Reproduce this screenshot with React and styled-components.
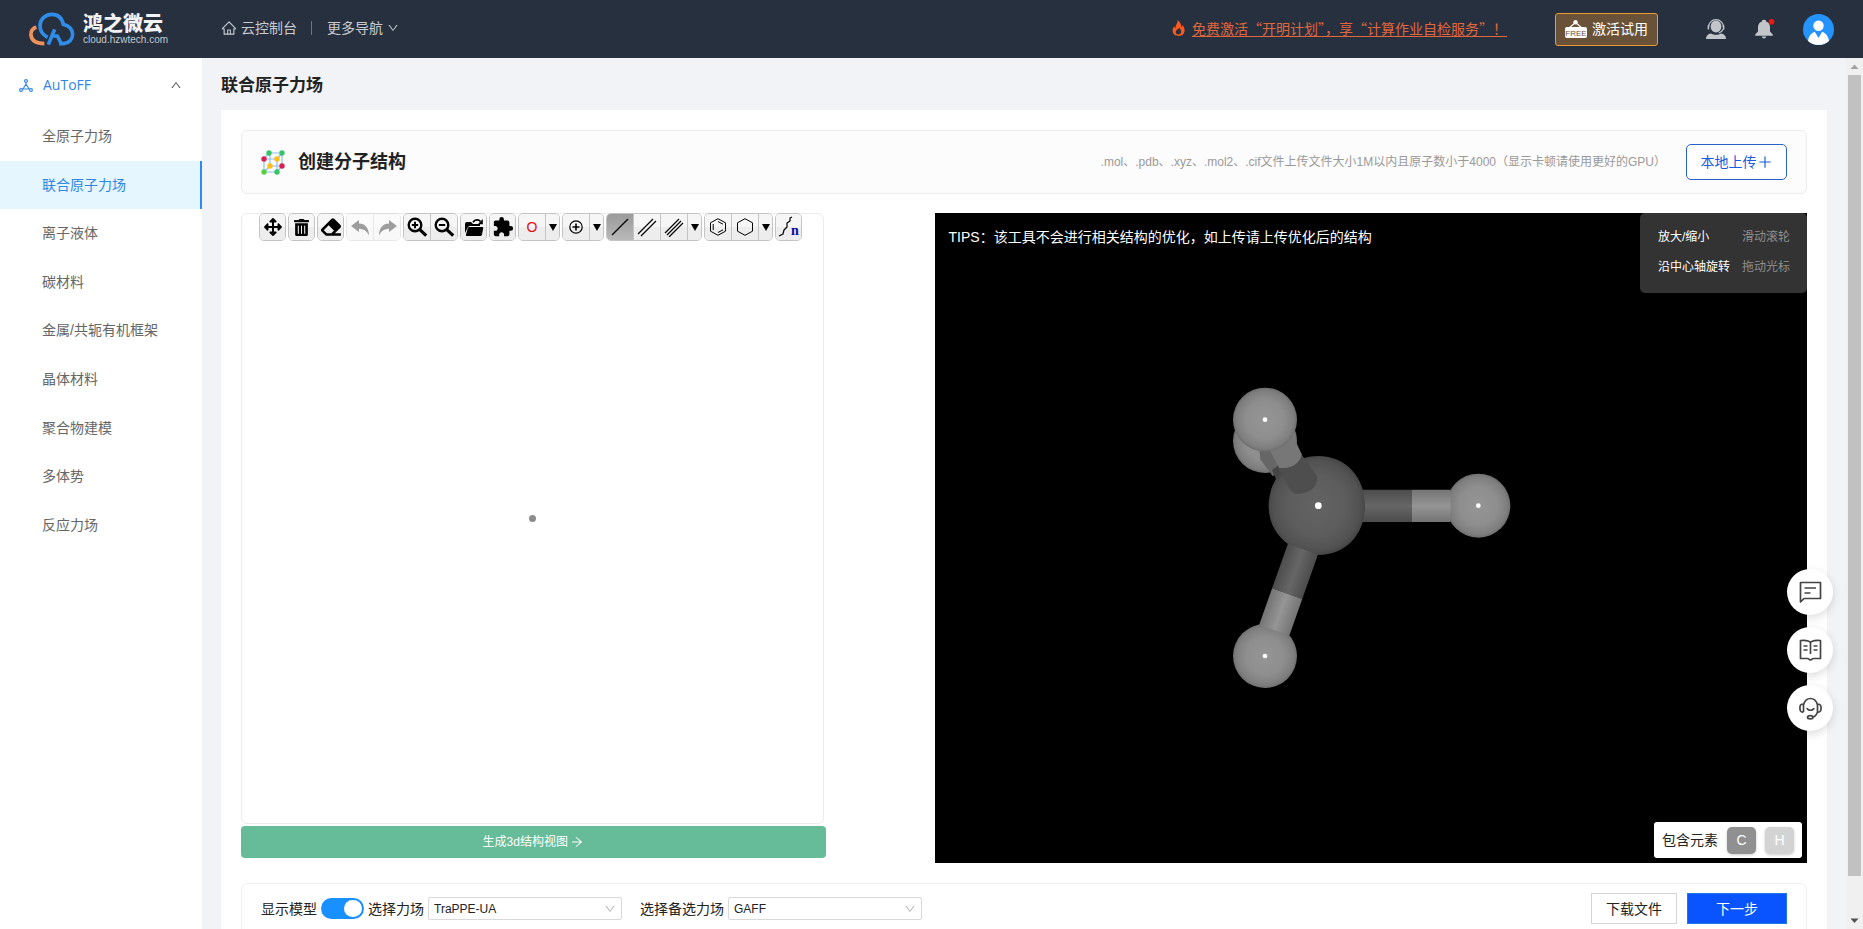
import React, { useState } from "react";
import styled, { createGlobalStyle, css } from "styled-components";
import {
  AiOutlineHome,
  AiOutlineDown,
  AiOutlineUp,
  AiOutlinePlus,
  AiOutlineArrowRight,
} from "react-icons/ai";
import { FaTrashAlt, FaArrowsAlt, FaEraser } from "react-icons/fa";
import { MdExtension } from "react-icons/md";

const GlobalStyle = createGlobalStyle`
  *, *::before, *::after { box-sizing: border-box; }
  body {
    margin: 0;
    font-family: "Liberation Sans", "Noto Sans CJK SC", sans-serif;
    font-size: 14px;
    line-height: 20px;
    color: #222;
  }
  button, select, input { font: inherit; color: inherit; }
  button { cursor: pointer; }
`;

/* ---------- shell ---------- */

const Page = styled.div`
  display: flex;
  flex-direction: column;
  height: 100vh;
  overflow: hidden;
  background: #f2f3f7;
`;

const Body = styled.div`
  display: flex;
  flex: 1;
  min-height: 0;
`;

const Main = styled.main`
  flex: 1;
  min-width: 0;
  overflow: hidden;
  padding: 0 19px;
`;

/* ---------- header ---------- */

const Header = styled.header`
  display: flex;
  align-items: center;
  flex: none;
  height: 58px;
  padding: 0 29px;
  background: #27303f;
  color: #c8ccd2;
`;

const Brand = styled.a`
  display: flex;
  align-items: center;
  gap: 8px;
  width: 192px;
  color: #f2f3f5;
  text-decoration: none;
`;

const BrandText = styled.span`
  display: flex;
  flex-direction: column;
`;

const BrandName = styled.strong`
  font-size: 20px;
  line-height: 22px;
  font-weight: 900;
`;

const BrandHost = styled.span`
  font-size: 10px;
  line-height: 10px;
  color: #c4c7cc;
`;

const TopNav = styled.nav`
  display: flex;
  align-items: center;
  height: 58px;
  padding-bottom: 2px;
`;

const TopLink = styled.a`
  display: flex;
  align-items: center;
  gap: 4px;
  color: inherit;
  text-decoration: none;
`;

const TopDivider = styled.span`
  width: 1px;
  height: 14px;
  margin: 0 15px 0 14px;
  background: #6f7681;
`;

const HeaderRight = styled.div`
  display: flex;
  align-items: center;
  margin-left: auto;
`;

const Promo = styled.a`
  display: flex;
  align-items: center;
  gap: 7px;
  margin-right: 48px;
  padding-bottom: 2px;
  font-family: "Noto Sans CJK SC", sans-serif;
  color: #e0673b;
  text-decoration: none;
  span { text-decoration: underline; text-underline-offset: 2px; }
`;

const TrialButton = styled.button`
  display: flex;
  align-items: center;
  gap: 5px;
  height: 33px;
  margin-right: 48px;
  padding: 0 9px;
  border: 1px solid #e99c33;
  border-radius: 3px;
  background: #6a5239;
  color: #fff;
`;

const HeaderIcon = styled.button`
  display: flex;
  margin-right: ${(p) => p.$gap}px;
  padding: 0;
  border: 0;
  background: none;
`;

/* ---------- sidebar ---------- */

const Sidebar = styled.aside`
  flex: none;
  width: 202px;
  background: #fff;
`;

const GroupButton = styled.button`
  display: flex;
  align-items: center;
  width: 100%;
  height: 54px;
  padding: 0 20px 0 19px;
  border: 0;
  background: none;
  color: #2f86e6;
  font-family: "Open Sans", sans-serif;
  font-size: 14px;
  span { flex: 1; margin-left: 10px; text-align: left; }
  svg:last-child { color: #555; }
`;

const MenuList = styled.ul`
  display: grid;
  grid-auto-rows: 1fr;
  min-height: 437px;
  margin: 0;
  padding: 0;
  list-style: none;
`;

const MenuLink = styled.a`
  display: flex;
  align-items: center;
  height: 100%;
  padding-left: 42px;
  border-right: 2px solid transparent;
  color: #666;
  text-decoration: none;
  ${(p) =>
    p.$active &&
    css`
      border-color: #2a8cf0;
      background: #e5f6ff;
      color: #2f86e6;
    `}
`;

/* ---------- content ---------- */

const PageTitle = styled.h1`
  margin: 0;
  padding: 16px 0 12px;
  font-size: 17px;
  line-height: 24px;
`;

const Panel = styled.section`
  padding: 20px 20px 0;
  background: #fff;
`;

const TitleCard = styled.div`
  display: flex;
  align-items: center;
  height: 64px;
  margin-bottom: 19px;
  padding: 0 19px 0 18px;
  border: 1px solid #ececec;
  border-radius: 6px;
  background: #fcfcfc;
  h2 {
    margin: 0 auto 0 12px;
    font-size: 18px;
    line-height: 24px;
  }
`;

const Hint = styled.p`
  margin: 0 20px 0 0;
  font-size: 12px;
  color: #999;
`;

const UploadButton = styled.button`
  display: flex;
  align-items: center;
  justify-content: center;
  width: 101px;
  height: 36px;
  padding: 0;
  border: 1px solid #2a62cc;
  border-radius: 5px;
  background: #fff;
  color: #1a5cdc;
`;

const Workbench = styled.div`
  display: grid;
  grid-template-columns: minmax(0, 67fr) minmax(0, 100fr);
  gap: 109px;
  margin-bottom: 20px;
`;

const EditorColumn = styled.div`
  display: flex;
  flex-direction: column;
  gap: 2px;
  height: 645px;
`;

const Editor = styled.div`
  display: flex;
  flex-direction: column;
  flex: 1;
  margin-right: 2px;
  border: 1px solid #ececec;
  border-radius: 6px;
`;

const Toolbar = styled.div`
  display: flex;
  gap: 2px;
  margin-top: -1px;
  padding-left: 17px;
`;

const ToolGroup = styled.div`
  display: flex;
  height: 28px;
  overflow: hidden;
  border: 1px solid #c4c4c4;
  border-radius: 5px;
  opacity: ${(p) => (p.$faded ? 0.38 : 1)};
`;

const Tool = styled.button`
  display: flex;
  align-items: center;
  justify-content: center;
  box-sizing: content-box;
  width: ${(p) => (p.$narrow ? 13 : 26)}px;
  padding: 0;
  border: 0;
  background: ${(p) =>
    p.$active
      ? "linear-gradient(#9a9a9a, #b9b9b9)"
      : "linear-gradient(#f6f6f6 0 50%, #ededed 50% 100%)"};
  color: ${(p) => p.$color || "#000"};
  & + & { border-left: 1px solid #c4c4c4; }
  &:only-child { width: 25px; }
`;

const Sketch = styled.div`
  display: grid;
  flex: 1;
  place-items: center;
  padding-bottom: 27px;
`;

const Dot = styled.span`
  width: 7px;
  height: 7px;
  border-radius: 50%;
  background: #8c8c8c;
`;

const GenerateButton = styled.button`
  display: flex;
  align-items: center;
  justify-content: center;
  gap: 2px;
  height: 32px;
  border: 0;
  border-radius: 4px;
  background: #66bb99;
  color: #fff;
  font-size: 12px;
`;

const Viewer = styled.div`
  position: relative;
  display: flex;
  align-items: center;
  justify-content: center;
  height: 650px;
  background: #000;
`;

const Tips = styled.p`
  position: absolute;
  top: 14px;
  left: 14px;
  margin: 0;
  color: #fff;
`;

const Controls = styled.dl`
  position: absolute;
  top: 0;
  right: 0;
  display: grid;
  grid-template-columns: auto auto;
  gap: 10px;
  width: 167px;
  height: 80px;
  margin: 0;
  padding: 14px 17px 16px 18px;
  border-radius: 5px;
  background: #333;
  font-size: 12px;
  white-space: nowrap;
  dt { color: #fff; }
  dd { margin: 0; color: #8f8f8f; text-align: right; }
`;

const Elements = styled.div`
  position: absolute;
  right: 5px;
  bottom: 5px;
  display: flex;
  align-items: center;
  gap: 9px;
  height: 36px;
  padding: 0 8px;
  border-radius: 3px;
  background: #fff;
`;

const ElementChip = styled.button`
  width: 29px;
  height: 27px;
  padding: 0;
  border: 0;
  border-radius: 5px;
  background: ${(p) => p.$tone};
  box-shadow: 0 1px 3px rgba(0, 0, 0, 0.2);
  color: #fff;
`;

const FooterCard = styled.form`
  display: flex;
  align-items: center;
  gap: 4px;
  height: 62px;
  margin-bottom: 20px;
  padding: 0 19px 11px;
  border: 1px solid #efefef;
  border-radius: 6px;
  white-space: nowrap;
`;

const Switch = styled.input`
  appearance: none;
  display: flex;
  width: 43px;
  height: 21px;
  margin: 0;
  padding: 2px;
  border-radius: 11px;
  background: ${(p) => (p.checked ? "#1890ff" : "#bbb")};
  justify-content: ${(p) => (p.checked ? "flex-end" : "flex-start")};
  cursor: pointer;
  &::before {
    content: "";
    width: 18px;
    height: 17px;
    border-radius: 9px;
    background: #fff;
  }
`;

const SelectBox = styled.span`
  position: relative;
  display: flex;
  align-items: center;
  width: 194px;
  margin-right: ${(p) => p.$gap || 0}px;
  select {
    appearance: none;
    width: 100%;
    height: 23px;
    padding: 0 26px 0 5px;
    border: 1px solid #d9d9d9;
    border-radius: 2px;
    background: #fff;
    font-size: 12px;
  }
  svg {
    position: absolute;
    right: 6px;
    color: #b5b5b5;
    pointer-events: none;
  }
`;

const Actions = styled.div`
  display: flex;
  gap: 10px;
  margin-left: auto;
`;

const ActionButton = styled.button`
  height: 31px;
  width: ${(p) => (p.$primary ? 100 : 86)}px;
  padding: 0;
  border: 1px solid ${(p) => (p.$primary ? "#1f7ae8" : "#d4d4d4")};
  background: ${(p) => (p.$primary ? "#0a54ff" : "#fff")};
  color: ${(p) => (p.$primary ? "#fff" : "#222")};
`;

/* ---------- overlays ---------- */

const FloatBar = styled.div`
  position: fixed;
  right: 30px;
  bottom: 198px;
  display: flex;
  flex-direction: column;
  gap: 12px;
`;

const FloatButton = styled.button`
  display: flex;
  align-items: center;
  justify-content: center;
  width: 46px;
  height: 46px;
  padding: 0;
  border: 0;
  border-radius: 50%;
  background: #fff;
  box-shadow: 0 3px 10px rgba(0, 0, 0, 0.14);
`;

const Scroller = styled.div`
  display: flex;
  flex-direction: column;
  align-items: center;
  justify-content: space-between;
  flex: none;
  width: 17px;
  background: #f0f0f0;
  svg { display: block; flex: none; }
`;

const Thumb = styled.div`
  flex: none;
  width: 13px;
  height: 92%;
  margin-bottom: auto;
  background: #c1c1c1;
`;

/* ---------- drawings ---------- */

const Logo = () => (
  <svg width="46" height="34" viewBox="86 36 138 102" fill="none" strokeWidth="11" aria-hidden="true">
    <path d="M108 81C95 86 91 96 92 106C94 122 106 131 132 131" stroke="#f0905a" />
    <path
      d="M144 134L163 88M150 108H171L183 131M176 131H190C206 129 217 118 217 103C217 88 205 76 189 73C185 54 172 43 154 43C135 43 119 58 119 77C119 92 127 104 142 112"
      stroke="#2f8ce8"
    />
  </svg>
);

const Flame = () => (
  <svg width="13" height="18" viewBox="0 0 13 18" aria-hidden="true">
    <path
      fill="#fa5a1e"
      fillRule="evenodd"
      d="M5.600 1C8 3 9.600 5 9 8c.8-.4 1.200-1 1.400-2C12 8 13 10 12.500 12.500 12 15.500 9.500 17 6.500 17S.8 15.200.6 12.300C.4 10 1.500 8.500 2.600 7c0 1.200.3 2 .9 2.500C3.500 6 6 4 5.600 1ZM6.500 15.400c1.600 0 2.700-1 2.700-2.600 0-1.400-1-2.300-1.200-3.800-2.200.8-4.200 2-4.200 4 0 1.500 1.100 2.400 2.700 2.400Z"
    />
  </svg>
);

const FreeSign = () => (
  <svg width="22" height="18" viewBox="0 0 22 18" aria-hidden="true">
    <path d="M4 8 10.500 2.500 17 8" fill="none" stroke="#fff" strokeWidth="1.200" />
    <circle cx="10.500" cy="2.200" r="2.200" fill="#fff" />
    <rect x="0" y="7" width="22" height="11" rx="2" fill="#fff" />
    <text x="11" y="16" fontSize="8" textAnchor="middle" fill="#6a5239">FREE</text>
  </svg>
);

const Agent = () => (
  <svg width="20" height="20" viewBox="0 0 20 20" aria-hidden="true">
    <ellipse cx="10" cy="7.500" rx="5.400" ry="6" fill="#c2c6cb" />
    <path d="M2.500 8a7.500 7.300 0 0 1 15 0M17.300 10c-.8 2-2.300 3.400-4.600 4" fill="none" stroke="#c2c6cb" strokeWidth="1.200" />
    <path d="M1.600 6.500h1.600v4H1.600zM16.800 6.500h1.600v4h-1.600z" fill="#c2c6cb" />
    <path d="M0 20c0-3.400 2-5.200 5-5.600 3 1.900 7 1.900 10 0 3 .4 5 2.200 5 5.600Z" fill="#c2c6cb" />
  </svg>
);

const Bell = () => (
  <svg width="21" height="20" viewBox="0 0 21 20" aria-hidden="true">
    <path
      fill="#c2c6cb"
      d="M9 .8c2.200 0 2.200 1.200 2 1.600 2.500.8 4 2.800 4 5.600v4.600l2.800 3v1.200H.2v-1.200L3 12.600V8c0-2.800 1.500-4.800 4-5.600C6.800 2 6.800.8 9 .8ZM6.800 17.600h4.400C11 19 10 19.400 9 19.400s-2-.4-2.200-1.800Z"
    />
    <circle cx="16.500" cy="2.800" r="2.800" fill="#f5150f" />
  </svg>
);

const Avatar = () => (
  <svg width="31" height="31" viewBox="0 0 31 31" aria-hidden="true">
    <circle cx="15.500" cy="15.500" r="15.500" fill="#2593fc" />
    <circle cx="15.500" cy="11.800" r="5.200" fill="#fff" />
    <path d="M5 26.900C6 21.500 8.500 19 11.800 17.800L15.500 24l3.700-6.200C22.500 19 25 21.500 26 26.900A15.500 15.500 0 0 1 5 26.900Z" fill="#fff" />
  </svg>
);

const MoleculeMark = () => (
  <svg width="14" height="13" viewBox="0 0 14 13" fill="none" stroke="#2f86e6" strokeWidth="1.100" aria-hidden="true">
    <circle cx="7" cy="2" r="1.400" />
    <path d="M7 3.400V5M7 5 4 10h6ZM3.800 10 3 10.300M10 10l1 .3" />
    <circle cx="2" cy="11" r="1.400" />
    <circle cx="12" cy="11" r="1.400" />
  </svg>
);

const latticeNodes = [
  [8, 3, "#35c468"], [21, 3, "#35c468"], [3, 9, "#d81e52"], [16, 9, "#fbbf16"],
  [9, 16, "#fbbf16"], [21, 16, "#d81e52"], [3, 22, "#56d23c"], [16, 22, "#35c468"],
];

const Lattice = () => (
  <svg width="26" height="26" viewBox="-1 -1 26 26" aria-hidden="true">
    <path
      d="M8 3H21V16H9V3M3 9H16V22H3ZM3 9 8 3M16 9l5-6M3 22l6-6M16 22l5-6"
      fill="none"
      stroke="#8fc0ee"
      strokeWidth="1.200"
    />
    {latticeNodes.map(([x, y, c]) => (
      <circle key={`${x}-${y}`} cx={x} cy={y} r="2.700" fill={c} />
    ))}
  </svg>
);

const ArrowBack = ({ flip }) => (
  <svg width="19" height="17" viewBox="0 0 19 17" aria-hidden="true">
    <path
      transform={flip ? "translate(19 0) scale(-1 1)" : undefined}
      d="M0 7 8 1v3.500C14 4.500 18 9 18 16.500 15.500 11.500 12.500 10 8 9.800V13Z"
      fill="#000"
    />
  </svg>
);

const Magnifier = ({ plus }) => (
  <svg width="21" height="20" viewBox="0 0 21 20" fill="none" stroke="#000" aria-hidden="true">
    <circle cx="8" cy="8" r="6.300" strokeWidth="2.400" />
    <path d="m12.800 12.600 6.400 6" strokeWidth="3.200" />
    <path d={plus ? "M4.800 8h6.400M8 4.800v6.400" : "M4.800 8h6.400"} strokeWidth="2" />
  </svg>
);

const OpenFolder = () => (
  <svg width="20" height="19" viewBox="0 0 20 19" aria-hidden="true">
    <path d="M1 15V6Q1 4 3 4H7L9 6H16V8H6Q4 8 3.500 10Z" fill="#000" />
    <path d="M5.500 9H18.500Q19.500 9 19.200 10.200L18 16.500Q17.700 18 16 18H3Q1.600 18 2 16.500L3.800 10.300Q4.200 9 5.500 9Z" fill="#000" />
    <path d="M9 4.200C11 1.500 14.500 1.200 16.500 3.500" fill="none" stroke="#000" strokeWidth="1.800" />
    <path d="M18.800 1v5.200h-5Z" fill="#000" />
  </svg>
);

const Caret = () => (
  <svg width="8" height="7" viewBox="0 0 8 7" aria-hidden="true">
    <path d="M0 0h8L4 7Z" fill="#000" />
  </svg>
);

const Charge = () => (
  <svg width="14" height="14" viewBox="0 0 14 14" fill="none" stroke="#000" strokeWidth="1.200" aria-hidden="true">
    <circle cx="7" cy="7" r="6.200" />
    <path d="M3.500 7h7M7 3.500v7" strokeWidth="1.600" />
  </svg>
);

const bondPaths = {
  1: "M2 18 18 2",
  2: "M1 17 16 2M4 19 19 4",
  3: "M1 16 15 2M3 18 17 4M5 20 19 6",
};

const Bond = ({ order }) => (
  <svg width="20" height="20" viewBox="0 0 20 20" fill="none" stroke="#000" strokeWidth="1.200" aria-hidden="true">
    <path d={bondPaths[order]} />
  </svg>
);

const Ring = ({ aromatic }) => (
  <svg width="18" height="18" viewBox="0 0 18 18" fill="none" stroke="#000" aria-hidden="true">
    <path d="M9 .7 16.500 4.800v8.400L9 17.300 1.500 13.200V4.800Z" />
    {aromatic && <path d="M4.200 6v6M9 3.500l5 2.700M9 14.500l5-2.700" />}
  </svg>
);

const Chain = () => (
  <svg width="22" height="22" viewBox="0 0 22 22" aria-hidden="true">
    <path d="M1 20 5 18 6 14 9 11 9 7 12 5 12 2 14 1" fill="none" stroke="#000" strokeWidth="1.200" strokeLinejoin="round" />
    <text x="13" y="19" fontFamily="Liberation Serif, serif" fontWeight="bold" fontSize="14" fill="#0a0aa0">n</text>
  </svg>
);

const Methane = () => (
  <svg width="340" height="330" viewBox="0 9 1020 990" role="img" aria-label="CH4">
    <defs>
      <radialGradient id="hydrogen">
        <stop offset="0" stopColor="#959595" />
        <stop offset="0.600" stopColor="#8e8e8e" />
        <stop offset="0.900" stopColor="#7e7e7e" />
        <stop offset="1" stopColor="#6e6e6e" />
      </radialGradient>
      <radialGradient id="carbon">
        <stop offset="0" stopColor="#636363" />
        <stop offset="0.600" stopColor="#5d5d5d" />
        <stop offset="0.900" stopColor="#525252" />
        <stop offset="1" stopColor="#474747" />
      </radialGradient>
      <linearGradient id="rodLight" x1="0" y1="0" x2="0" y2="1">
        <stop offset="0" stopColor="#747474" />
        <stop offset="0.500" stopColor="#959595" />
        <stop offset="1" stopColor="#747474" />
      </linearGradient>
      <linearGradient id="rodDark" x1="0" y1="0" x2="0" y2="1">
        <stop offset="0" stopColor="#4c4c4c" />
        <stop offset="0.500" stopColor="#666" />
        <stop offset="1" stopColor="#4c4c4c" />
      </linearGradient>
    </defs>
    <circle cx="192" cy="213" r="96" fill="url(#hydrogen)" />
    <path d="M175 240 178 268 215 318 260 300 230 230Z" fill="#666" />
    <path d="M213 300 235 285 255 315 226 330Z" fill="#454545" />
    <circle cx="832" cy="407" r="96" fill="url(#hydrogen)" />
    <path d="M480 359H633V456H480Z" fill="url(#rodDark)" />
    <path d="M633 359H749V456H633Z" fill="url(#rodLight)" />
    <circle cx="192" cy="858" r="96" fill="url(#hydrogen)" />
    <g transform="translate(352 407) rotate(109.500)">
      <path d="M130 -48H280V48H130Z" fill="url(#rodDark)" />
      <path d="M280 -48H396V48H280Z" fill="url(#rodLight)" />
    </g>
    <path d="M352 258C435 258 492 322 492 407C492 492 435 555 352 555Q300 535 262 523C225 495 203 457 203 407C203 325 265 258 352 258Z" fill="url(#carbon)" />
    <path d="M230 292Q270 300 303 256L348 318Q352 365 292 372C270 370 265 355 255 338Z" fill="#4e4e4e" />
    <path d="M200 230 275 195 303 254Q288 298 235 294Z" fill="#777" />
    <circle cx="192" cy="149" r="96" fill="url(#hydrogen)" />
    <circle cx="192" cy="149" r="7" fill="#fff" />
    <circle cx="832" cy="407" r="7" fill="#fff" />
    <circle cx="192" cy="858" r="7" fill="#fff" />
    <circle cx="352" cy="407" r="10" fill="#fff" />
  </svg>
);

const floatIcons = {
  留言: "M1.500 1.500H21.500V17.500H5L1.500 21ZM5.500 7H17M5.500 12H11.500",
  文档: "M11.500 3.500C10 1.500 6 1 1.500 1.500V19.500H8.500C10 19.500 10.500 21 11.500 21S13 19.500 14.500 19.500H21.500V1.500C17 1 13 1.500 11.500 3.500V15M4.500 7H8.500M4.500 11H8.500M14.500 7H18.500M14.500 11H18.500",
  客服: "M4.500 15V8C5.500 4 8 1.500 11.500 1.500S17.500 4 18.500 8V15C17.500 18 16 19.500 14 20M4.500 7C1.500 7 .9 8.500.9 11S1.500 15.500 4.500 15M18.500 7C21.500 7 22.100 8.500 22.100 11S21.500 15.500 18.500 15M8 11C9 14 14 14 15 11M8.500 20.200C8.500 18 14 18 14 20.200S8.500 22.400 8.500 20.200Z",
};

/* ---------- data ---------- */

const menu = [
  "全原子力场", "联合原子力场", "离子液体", "碳材料", "金属/共轭有机框架",
  "晶体材料", "聚合物建模", "多体势", "反应力场",
];

const toolGroups = [
  { tools: [["移动", <FaArrowsAlt size={18} />]] },
  { tools: [["清空", <FaTrashAlt size={17} />]] },
  { tools: [["擦除", <FaEraser size={20} />]] },
  { faded: true, tools: [["撤销", <ArrowBack />], ["重做", <ArrowBack flip />]] },
  { tools: [["放大", <Magnifier plus />], ["缩小", <Magnifier />]] },
  { tools: [["打开", <OpenFolder />]] },
  { tools: [["模板", <MdExtension size={22} />]] },
  { tools: [["氧", "O", { $color: "#e01010" }], ["更多元素", <Caret />, { $narrow: true }]] },
  { tools: [["电荷", <Charge />], ["更多电荷", <Caret />, { $narrow: true }]] },
  {
    tools: [
      ["单键", <Bond order={1} />, { $active: true }],
      ["双键", <Bond order={2} />],
      ["三键", <Bond order={3} />],
      ["更多化学键", <Caret />, { $narrow: true }],
    ],
  },
  { tools: [["苯环", <Ring aromatic />], ["环己烷", <Ring />], ["更多环", <Caret />, { $narrow: true }]] },
  { tools: [["碳链", <Chain />]] },
];

export default function App() {
  const [active, setActive] = useState("联合原子力场");
  const [showModel, setShowModel] = useState(true);

  return (
    <Page>
      <GlobalStyle />
      <Header>
        <Brand href="#home">
          <Logo />
          <BrandText>
            <BrandName>鸿之微云</BrandName>
            <BrandHost>cloud.hzwtech.com</BrandHost>
          </BrandText>
        </Brand>
        <TopNav>
          <TopLink href="#console"><AiOutlineHome size={16} />云控制台</TopLink>
          <TopDivider />
          <TopLink href="#more">更多导航<AiOutlineDown size={12} /></TopLink>
        </TopNav>
        <HeaderRight>
          <Promo href="#promo">
            <Flame />
            <span>免费激活“开明计划”，享“计算作业自检服务”！</span>
          </Promo>
          <TrialButton type="button"><FreeSign />激活试用</TrialButton>
          <HeaderIcon type="button" aria-label="客服" $gap={29}><Agent /></HeaderIcon>
          <HeaderIcon type="button" aria-label="通知" $gap={27}><Bell /></HeaderIcon>
          <HeaderIcon type="button" aria-label="账户" $gap={0}><Avatar /></HeaderIcon>
        </HeaderRight>
      </Header>
      <Body>
        <Sidebar>
          <GroupButton type="button">
            <MoleculeMark />
            <span>AuToFF</span>
            <AiOutlineUp size={12} />
          </GroupButton>
          <MenuList>
            {menu.map((name) => (
              <li key={name}>
                <MenuLink href={`#${name}`} $active={name === active} onClick={() => setActive(name)}>
                  {name}
                </MenuLink>
              </li>
            ))}
          </MenuList>
        </Sidebar>
        <Main>
          <PageTitle>联合原子力场</PageTitle>
          <Panel>
            <TitleCard>
              <Lattice />
              <h2>创建分子结构</h2>
              <Hint>.mol、.pdb、.xyz、.mol2、.cif文件上传文件大小1M以内且原子数小于4000（显示卡顿请使用更好的GPU）</Hint>
              <UploadButton type="button">本地上传<AiOutlinePlus size={16} /></UploadButton>
            </TitleCard>
            <Workbench>
              <EditorColumn>
                <Editor>
                  <Toolbar role="toolbar" aria-label="绘图工具">
                    {toolGroups.map((group) => (
                      <ToolGroup key={group.tools[0][0]} $faded={group.faded}>
                        {group.tools.map(([label, icon, look]) => (
                          <Tool key={label} type="button" aria-label={label} {...look}>{icon}</Tool>
                        ))}
                      </ToolGroup>
                    ))}
                  </Toolbar>
                  <Sketch><Dot /></Sketch>
                </Editor>
                <GenerateButton type="button">生成3d结构视图<AiOutlineArrowRight size={14} /></GenerateButton>
              </EditorColumn>
              <Viewer>
                <Methane />
                <Tips>TIPS：该工具不会进行相关结构的优化，如上传请上传优化后的结构</Tips>
                <Controls>
                  <dt>放大/缩小</dt>
                  <dd>滑动滚轮</dd>
                  <dt>沿中心轴旋转</dt>
                  <dd>拖动光标</dd>
                </Controls>
                <Elements>
                  包含元素
                  <ElementChip type="button" $tone="#909090">C</ElementChip>
                  <ElementChip type="button" $tone="#d3d3d3">H</ElementChip>
                </Elements>
              </Viewer>
            </Workbench>
            <FooterCard onSubmit={(e) => e.preventDefault()}>
              <label htmlFor="show-model">显示模型</label>
              <Switch
                id="show-model"
                type="checkbox"
                role="switch"
                checked={showModel}
                onChange={(e) => setShowModel(e.target.checked)}
              />
              <label htmlFor="field">选择力场</label>
              <SelectBox $gap={14}>
                <select id="field"><option>TraPPE-UA</option></select>
                <AiOutlineDown size={12} />
              </SelectBox>
              <label htmlFor="fallback">选择备选力场</label>
              <SelectBox>
                <select id="fallback"><option>GAFF</option></select>
                <AiOutlineDown size={12} />
              </SelectBox>
              <Actions>
                <ActionButton type="button">下载文件</ActionButton>
                <ActionButton type="submit" $primary>下一步</ActionButton>
              </Actions>
            </FooterCard>
          </Panel>
        </Main>
        <Scroller aria-hidden="true">
          <svg width="17" height="17" viewBox="0 0 17 17"><path d="M4.500 11h8l-4-4.500Z" fill="#a3a3a3" /></svg>
          <Thumb />
          <svg width="17" height="17" viewBox="0 0 17 17"><path d="M4.500 6.500h8l-4 4.500Z" fill="#505050" /></svg>
        </Scroller>
      </Body>
      <FloatBar>
        {Object.entries(floatIcons).map(([label, d]) => (
          <FloatButton key={label} type="button" aria-label={label}>
            <svg width="23" height="23" viewBox="0 0 23 23" fill="none" stroke="#444" strokeWidth="1.700" strokeLinejoin="round">
              <path d={d} />
            </svg>
          </FloatButton>
        ))}
      </FloatBar>
    </Page>
  );
}
